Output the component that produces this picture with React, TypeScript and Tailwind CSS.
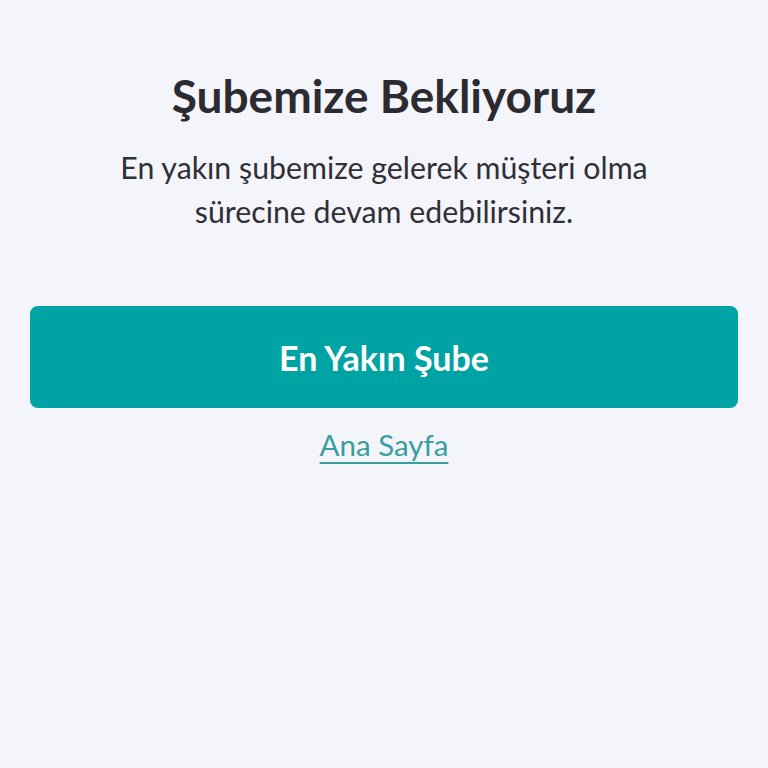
export default function App() {
  return (
    <div
      className="min-h-[768px] w-full bg-[#f4f5fa] flex flex-col items-center px-[30px]"
      style={{ fontFamily: "Lato, 'Noto Sans', sans-serif" }}
    >
      <h1 className="mt-[66px] text-[46px] leading-[60px] font-bold text-[#2b2b31] text-center">
        Şubemize Bekliyoruz
      </h1>
      <p className="mt-[19px] text-[30.3px] leading-[44px] text-[#2f2f35] text-center max-w-[560px]">
        En yakın şubemize gelerek müşteri olma sürecine devam edebilirsiniz.
      </p>
      <button className="mt-[73px] w-full h-[102px] rounded-[8px] bg-[#00a3a3] text-white text-[34px] font-bold">
        En Yakın Şube
      </button>
      <a href="#" className="mt-[17px] text-[29.5px] leading-[40px] text-[#3a9e9e] underline underline-offset-[6px] decoration-2">
        Ana Sayfa
      </a>
    </div>
  )
}
